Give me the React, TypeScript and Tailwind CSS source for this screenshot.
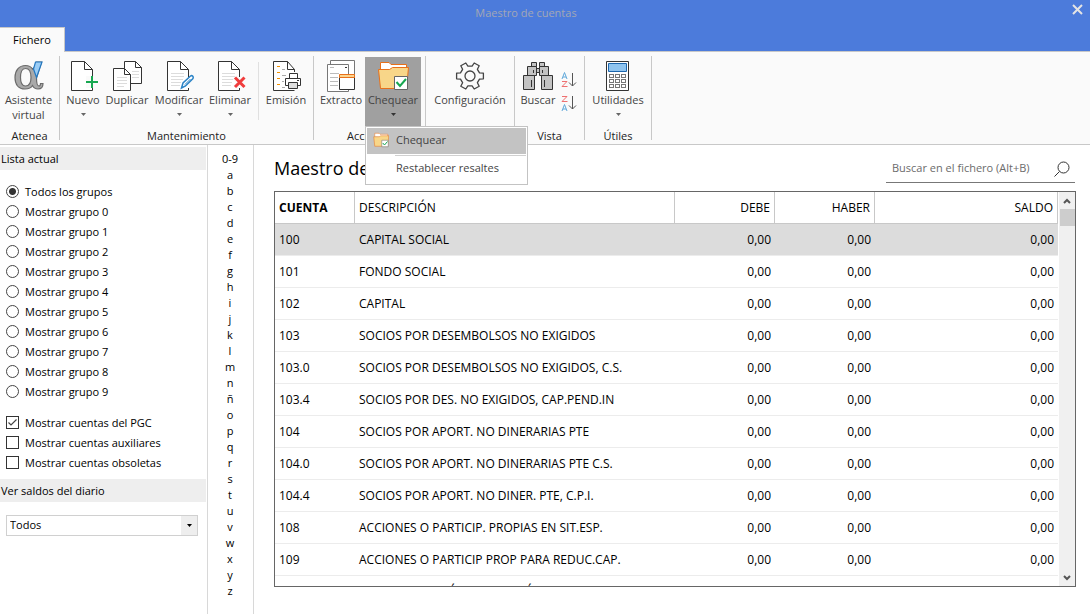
import { ReactNode, useState } from "react";

const groups = ["Todos los grupos", ...Array.from({ length: 10 }, (_, i) => `Mostrar grupo ${i}`)];
const letters = ["0-9", ..."abcdefghijklmnñopqrstuvwxyz".split("")];

const accounts: [string, string][] = [
  ["100", "CAPITAL SOCIAL"],
  ["101", "FONDO SOCIAL"],
  ["102", "CAPITAL"],
  ["103", "SOCIOS POR DESEMBOLSOS NO EXIGIDOS"],
  ["103.0", "SOCIOS POR DESEMBOLSOS NO EXIGIDOS, C.S."],
  ["103.4", "SOCIOS POR DES. NO EXIGIDOS, CAP.PEND.IN"],
  ["104", "SOCIOS POR APORT. NO DINERARIAS PTE"],
  ["104.0", "SOCIOS POR APORT. NO DINERARIAS PTE C.S."],
  ["104.4", "SOCIOS POR APORT. NO DINER. PTE, C.P.I."],
  ["108", "ACCIONES O PARTICIP. PROPIAS EN SIT.ESP."],
  ["109", "ACCIONES O PARTICIP PROP PARA REDUC.CAP."],
  ["110", "PRIMA DE EMISIÓN O ASUNCIÓN"],
];

function Svg({ children, size = 32 }: { children: ReactNode; size?: number }) {
  return (
    <svg width={size} height={size} viewBox="0 0 32 32" fill="none" aria-hidden="true" className="block shrink-0">
      {children}
    </svg>
  );
}

const AlphaIcon = () => (
  <Svg>
    <path
      d="M19.500 9 C18 6.500 15.500 5.500 12.500 5.500 C6 5.500 2 10.500 2 17.500 C2 24.500 5.500 29 12 29 C15.500 29 18 28 19.500 25.500 C20.500 27.500 22 29 25 29 C28.500 29 30 27 30 23.500 L27.500 23.500 C27.500 25 27 26 26 26 C24 26 23.500 23 23.500 18 L28.500 2 H23.500 L22 7 Z M12.500 8.500 C16.500 8.500 18 12 18 17.500 C18 22.500 16.500 26 12.500 26 C9 26 7.500 22.500 7.500 17.500 C7.500 12 9 8.500 12.500 8.500 Z"
      fill="#a9a9a9"
      stroke="#6b6b6b"
      strokeWidth="1.200"
      fillRule="evenodd"
    />
    <path d="M20.500 9 L22.500 2 H29 L23.500 17.500 Z" fill="#9bcdf5" stroke="#2578c0" strokeWidth="1.200" />
  </Svg>
);

const Page = ({ lines = true }: { lines?: boolean }) => (
  <>
    <path d="M4.500 1.500 H17.500 L25.500 9.500 V30.500 H4.500 Z" fill="#fff" />
    <path d="M25.500 17 V9.500 L17.500 1.500 H4.500 V30.500 H25.500 V28" stroke="#333" />
    <path d="M17.500 1.500 V9.500 H25.500" stroke="#333" />
    {lines && <path d="M8 13.500 H21 M8 16.500 H21 M8 19.500 H20 M8 22.500 H18 M8 25.500 H17" stroke="#dcdcdc" />}
  </>
);

const NewIcon = () => (
  <Svg>
    <Page lines={false} />
    <path d="M19 16 H31 V28 H19 Z" fill="#fafafa" />
    <path d="M25 16 V28 M19 22 H31" stroke="#17a750" strokeWidth="2" />
  </Svg>
);

const DuplicateIcon = () => (
  <Svg>
    <path d="M13.500 1.500 H24.500 L30.500 7.500 V23.500 H13.500 Z" fill="#fff" stroke="#333" />
    <path d="M24.500 1.500 V7.500 H30.500" stroke="#333" />
    <path d="M21 11.500 H28 M21 14.500 H28 M21 17.500 H28" stroke="#dcdcdc" />
    <path d="M2.500 8.500 H13.500 L19.500 14.500 V30.500 H2.500 Z" fill="#fff" stroke="#333" />
    <path d="M13.500 8.500 V14.500 H19.500" stroke="#333" />
    <path d="M6 17.500 H16 M6 20.500 H16 M6 23.500 H16 M6 26.500 H13" stroke="#dcdcdc" />
  </Svg>
);

const EditIcon = () => (
  <Svg>
    <Page />
    <path d="M18.500 28 L20 23 L27.500 16 C29 15 31 16.500 30 18.500 L22.500 26 Z" fill="#fff" stroke="#2b83c6" strokeWidth="1.500" />
    <path d="M22 24.500 L27.500 19" stroke="#2b83c6" />
  </Svg>
);

const DeleteIcon = () => (
  <Svg>
    <Page />
    <path d="M21 17 L30.500 27.500 M30.500 17 L21 27.500" stroke="#fafafa" strokeWidth="6" />
    <path d="M21 17.500 L30.500 27 M30.500 17.500 L21 27" stroke="#f03c3c" strokeWidth="3" />
  </Svg>
);

const PrintIcon = () => (
  <Svg>
    <path d="M24.500 12 V9.500 L17.500 1.500 H3.500 V30.500 H24.500" fill="#fff" stroke="#333" />
    <path d="M17.500 1.500 V9.500 H24.500" stroke="#333" />
    <path d="M7 6.500 H10 M7 12.500 H10 M7 18.500 H10 M7 24.500 H10" stroke="#f29100" />
    <path d="M12 9.500 H15 M12 15.500 H16 M12 21.500 H14 M12 27.500 H15" stroke="#aaa" />
    <path d="M19.500 18 V13.500 H27.500 V18" fill="#fff" stroke="#333" />
    <path d="M19 25.500 H15.500 V18.500 H30.500 V25.500 H27" fill="#fff" stroke="#333" />
    <path d="M18.500 22.500 H27.500 V28.500 H18.500 Z" fill="#ddd" stroke="#333" />
    <path d="M27 20.500 H29" stroke="#333" />
  </Svg>
);

const ExtractIcon = () => (
  <Svg>
    <path d="M5.500 0.500 H29.500 V26.500 H5.500 Z" fill="#fff" stroke="#777" />
    <path d="M2.500 4.500 H23.500 V31.500 H2.500 Z" fill="#fff" stroke="#777" />
    <path d="M5 7.500 H9 M5 13.500 H14 M5 17.500 H13 M5 21.500 H13 M5 25.500 H13" stroke="#bbb" />
    <path d="M20 7.500 H22" stroke="#333" />
    <path d="M14.500 17.500 H29.500 V29.500 H14.500 Z" fill="#fff" stroke="#333" />
    <path d="M14.500 14.500 H29.500 V17.500 H14.500 Z" fill="#fbd48f" stroke="#e8701a" />
  </Svg>
);

const FolderCheckIcon = ({ size = 32 }: { size?: number }) => (
  <Svg size={size}>
    <path d="M3.500 9 V2.500 H12 L14 4.500 H29.500 V10" fill="#fff" stroke="#e8701a" />
    <path d="M1.500 9.500 H12.500 L15.500 7.500 H31.500 L29.500 28.500 H3.500 Z" fill="#f8d689" stroke="#e8701a" />
    <path d="M17.500 16.500 H30.500 V29.500 H17.500 Z" fill="#fff" stroke="#666" />
    <path d="M19.500 22 L23 26 L29 19" stroke="#17a750" strokeWidth="2" />
  </Svg>
);

const GearIcon = () => (
  <Svg>
    <path
      d="M25.500 12.900 L29.400 13.200 V18.800 L25.500 19.100 L23.400 22.700 L25.200 26.200 L20.200 29 L18.100 25.800 H13.900 L11.800 29 L6.800 26.200 L8.600 22.700 L6.500 19.100 L2.600 18.800 V13.200 L6.500 12.900 L8.600 9.300 L6.800 5.800 L11.800 3 L13.900 6.200 H18.100 L20.200 3 L25.200 5.800 L23.400 9.300 Z"
      fill="#fafafa"
      stroke="#444"
      strokeWidth="1.300"
      strokeLinejoin="round"
    />
    <circle cx="16" cy="16" r="5" stroke="#444" strokeWidth="1.300" />
  </Svg>
);

const BinocularsIcon = () => (
  <Svg>
    <g fill="#c3c3c3" stroke="#333">
      <path d="M9.500 2.500 H14.500 V6.500 H9.500 Z M17.500 2.500 H22.500 V6.500 H17.500 Z" />
      <path d="M14.500 8.500 H17.500 V12.500 H14.500 Z" />
      <path d="M5.500 6.500 H14.500 V15.500 H5.500 Z M17.500 6.500 H26.500 V15.500 H17.500 Z" />
      <path d="M1.500 15.500 H12.500 V29.500 H1.500 Z M19.500 15.500 H30.500 V29.500 H19.500 Z" />
      <path d="M11.500 10 V13 M20.500 10 V13 M9.500 20 V27 M22.500 20 V27" />
    </g>
  </Svg>
);

const CalculatorIcon = () => (
  <Svg>
    <path d="M4.500 1.500 H26.500 V30.500 H4.500 Z" fill="#fff" stroke="#333" />
    <path d="M6.500 3.500 H24.500 V11.500 H6.500 Z" fill="#8fc4ef" stroke="#1c66ad" />
    <g stroke="#777">
      {[14.5, 19.5, 24.5].map((y) =>
        [7.5, 13.5, 19.5].map((x) => <rect key={`${x}-${y}`} x={x} y={y} width="4" height="3" fill="#fff" />),
      )}
    </g>
  </Svg>
);

const SortIcon = ({ up = false }: { up?: boolean }) => (
  <svg width="16" height="18" viewBox="0 0 16 18" fill="none" aria-hidden="true" className="block">
    <path d={up ? "M1 17 L3.500 10.500 L6 17 M2 15 H5" : "M1 8 L3.500 1.500 L6 8 M2 6 H5"} stroke="#5fa8da" />
    <path d={up ? "M1 2.500 H6 L1 7.500 H6.500" : "M1 10.500 H6 L1 15.500 H6.500"} stroke="#ee7070" />
    <path d="M11.500 2 V15 M8 11.500 L11.500 15 L15 11.500" stroke="#555" />
  </svg>
);

function Caret({ className = "text-[#666]" }: { className?: string }) {
  return (
    <svg width="5" height="3" viewBox="0 0 5 3" aria-hidden="true" className={className}>
      <path d="M0 0 H5 L2.500 3 Z" fill="currentColor" />
    </svg>
  );
}

function RibbonButton({
  icon,
  label,
  className,
  menu = false,
  active = false,
}: {
  icon: ReactNode;
  label: ReactNode;
  className: string;
  menu?: boolean;
  active?: boolean;
}) {
  return (
    <button
      type="button"
      aria-haspopup={menu ? "menu" : undefined}
      aria-expanded={menu ? active : undefined}
      className={`flex h-[70px] shrink-0 flex-col items-center whitespace-nowrap pt-[3px] text-[11px] leading-[15px] text-[#444] ${active ? "bg-[#a0a0a0]" : ""} ${className}`}
    >
      {icon}
      <span>{label}</span>
      {menu && <Caret className={active ? "mt-[6px] text-[#333]" : "mt-[6px] text-[#666]"} />}
    </button>
  );
}

function RibbonGroup({ caption, className, children }: { caption: string; className: string; children: ReactNode }) {
  return (
    <section
      aria-label={caption || "Configuración"}
      className={`flex shrink-0 flex-col border-r border-[#c8c8c8] pt-px ${className}`}
    >
      <div className="flex">{children}</div>
      <div className="h-[14px] text-center text-[11px] leading-[18px] text-[#222]">{caption}</div>
    </section>
  );
}

export default function App() {
  const [group, setGroup] = useState(0);
  const [checks, setChecks] = useState([true, false, false]);

  return (
    <div className="flex h-screen flex-col overflow-hidden bg-white font-['Open_Sans','Noto_Sans',sans-serif] text-[11px] text-black">
      <header className="bg-[#4c7bdb]">
        <div className="flex h-[27px] items-center">
          <h1 className="flex-1 pl-3 pr-6 text-center text-[11px] text-[#a3a7b5]">Maestro de cuentas</h1>
          <button type="button" aria-label="Cerrar" className="flex h-[18px] w-[26px] items-center justify-center self-start">
            <svg width="12" height="12" viewBox="0 0 12 12" aria-hidden="true">
              <path d="M2 2 L11 11 M11 2 L2 11" stroke="#e4e4e4" strokeWidth="2" />
            </svg>
          </button>
        </div>
        <nav className="flex h-[25px]">
          <button type="button" className="w-[65px] border-t border-r border-[#c8c8c8] bg-[#fafafa] text-[11px]">
            Fichero
          </button>
          <div className="flex-1 border-b border-[#c8c8c8]" />
        </nav>
      </header>

      <div className="flex h-[93px] shrink-0 border-b border-[#c8c8c8] bg-[#fafafa] pt-1 pb-1">
        <RibbonGroup caption="Atenea" className="w-[60px]">
          <RibbonButton
            className="w-[57px]"
            icon={<AlphaIcon />}
            label={
              <>
                Asistente
                <br />
                virtual
              </>
            }
          />
        </RibbonGroup>
        <RibbonGroup caption="Mantenimiento" className="w-[254px]">
          <RibbonButton className="ml-[3px] w-10" icon={<NewIcon />} label="Nuevo" menu />
          <RibbonButton className="w-12" icon={<DuplicateIcon />} label="Duplicar" />
          <RibbonButton className="w-14" icon={<EditIcon />} label="Modificar" menu />
          <RibbonButton className="w-[46px]" icon={<DeleteIcon />} label="Eliminar" menu />
          <div className="mt-[5px] ml-[5px] h-[58px] w-px bg-[#e0e0e0]" />
          <RibbonButton className="w-[54px]" icon={<PrintIcon />} label="Emisión" />
        </RibbonGroup>
        <RibbonGroup caption="Acciones" className="w-[112px]">
          <RibbonButton className="ml-[3px] w-12" icon={<ExtractIcon />} label="Extracto" />
          <div className="relative">
            <RibbonButton className="w-14" icon={<FolderCheckIcon />} label="Chequear" menu active />
            <div
              role="menu"
              className="absolute top-[69px] left-0 z-10 w-[163px] border border-[#c3c3c3] bg-white p-px text-[11px] text-[#444]"
            >
              <button role="menuitem" type="button" className="flex h-[26px] w-full items-center bg-[#c3c3c3] pb-[2px] pl-[6px]">
                <FolderCheckIcon size={16} />
                <span className="pl-[7px]">Chequear</span>
              </button>
              <div className="mt-px ml-7 h-px bg-[#d0d0d0]" />
              <button
                role="menuitem"
                type="button"
                className="flex h-[27px] w-full items-center pb-[2px] pl-[29px] whitespace-nowrap"
              >
                Restablecer resaltes
              </button>
            </div>
          </div>
        </RibbonGroup>
        <RibbonGroup caption="" className="w-[89px]">
          <RibbonButton className="w-[88px]" icon={<GearIcon />} label="Configuración" />
        </RibbonGroup>
        <RibbonGroup caption="Vista" className="w-[70px]">
          <RibbonButton className="ml-[3px] w-10" icon={<BinocularsIcon />} label="Buscar" />
          <div className="ml-[3px] flex flex-col gap-[5px] pt-[14px]">
            <button type="button" aria-label="Orden ascendente">
              <SortIcon />
            </button>
            <button type="button" aria-label="Orden descendente">
              <SortIcon up />
            </button>
          </div>
        </RibbonGroup>
        <RibbonGroup caption="Útiles" className="w-[67px]">
          <RibbonButton className="w-[66px]" icon={<CalculatorIcon />} label="Utilidades" menu />
        </RibbonGroup>
      </div>

      <div className="flex min-h-0 flex-1">
        <aside className="w-[208px] shrink-0 border-r border-[#d8d8d8] pt-[2px] pr-px">
          <h2 className="h-[23px] bg-[#eee] pl-px leading-[23px]">Lista actual</h2>
          <fieldset className="mt-3 pl-[6px]">
            {groups.map((g, i) => (
              <label key={g} className="flex h-5 items-center gap-[6px]">
                <input
                  type="radio"
                  name="grupo"
                  checked={group === i}
                  onChange={() => setGroup(i)}
                  className="mb-px size-[13px] appearance-none rounded-full border border-[#444] bg-white checked:bg-[radial-gradient(circle,#333_0_3px,#fff_4px)]"
                />
                {g}
              </label>
            ))}
          </fieldset>
          <fieldset className="mt-[11px] pl-[6px]">
            {["Mostrar cuentas del PGC", "Mostrar cuentas auxiliares", "Mostrar cuentas obsoletas"].map((t, i) => (
              <label key={t} className="flex h-5 items-center gap-[6px]">
                <span className="relative mb-px flex">
                  <input
                    type="checkbox"
                    checked={checks[i]}
                    onChange={() => setChecks(checks.map((c, j) => (j === i ? !c : c)))}
                    className="peer size-[13px] appearance-none border border-[#333] bg-white"
                  />
                  <svg
                    width="13"
                    height="13"
                    viewBox="0 0 13 13"
                    aria-hidden="true"
                    className="pointer-events-none absolute inset-0 hidden peer-checked:block"
                  >
                    <path d="M2.500 6.500 L5 9 L10.500 3.500" fill="none" stroke="#444" strokeWidth="1.200" />
                  </svg>
                </span>
                {t}
              </label>
            ))}
          </fieldset>
          <h2 className="mt-[6px] h-[23px] bg-[#eee] pl-px leading-[23px]">
            <label htmlFor="saldos">Ver saldos del diario</label>
          </h2>
          <div className="relative mt-[13px] mr-2 ml-[6px]">
            <select id="saldos" className="block h-[21px] w-full appearance-none border border-[#d0d0d0] bg-white pl-[3px]">
              <option>Todos</option>
            </select>
            <span className="pointer-events-none absolute inset-y-px right-px flex w-4 items-center justify-center bg-[#eee]">
              <Caret className="text-black" />
            </span>
          </div>
        </aside>

        <nav aria-label="Índice" className="flex w-[46px] shrink-0 flex-col border-r border-[#d8d8d8] pt-[6px]">
          {letters.map((l) => (
            <button key={l} type="button" className="h-4 shrink-0 pr-px leading-4">
              {l}
            </button>
          ))}
        </nav>

        <main className="flex min-w-0 flex-1 flex-col pr-[14px] pb-[27px] pl-5">
          <div className="flex h-[46px] shrink-0 items-start justify-between">
            <h2 className="pt-[11px] text-[18px] leading-[24px]">Maestro de cuentas</h2>
            <div className="mt-[10px] mr-px flex h-7 w-[189px] items-center border-b border-[#777] pr-[5px] pl-[6px]">
              <input
                type="text"
                aria-label="Buscar en el fichero"
                placeholder="Buscar en el fichero (Alt+B)"
                className="min-w-0 flex-1 outline-none placeholder:text-[#6b6b6b]"
              />
              <button type="button" aria-label="Buscar">
                <svg width="16" height="16" viewBox="0 0 16 16" fill="none" aria-hidden="true">
                  <circle cx="9.500" cy="6.500" r="5.500" stroke="#333" />
                  <path d="M5.500 10.500 L0.500 15.500" stroke="#333" />
                </svg>
              </button>
            </div>
          </div>

          <div className="flex min-h-0 flex-1 border border-[#666]">
            <div className="min-w-0 flex-1 overflow-hidden">
              <table className="w-full table-fixed border-separate border-spacing-0 text-[12px]">
                <colgroup>
                  <col className="w-20" />
                  <col className="w-80" />
                  <col className="w-[100px]" />
                  <col className="w-[100px]" />
                  <col />
                </colgroup>
                <thead>
                  <tr className="h-8 *:border-r *:border-b *:border-[#c8c8c8] *:p-0 *:px-1 *:font-normal">
                    <th className="text-left font-bold!">CUENTA</th>
                    <th className="text-left">DESCRIPCIÓN</th>
                    <th className="text-right">DEBE</th>
                    <th className="text-right">HABER</th>
                    <th className="text-right">SALDO</th>
                  </tr>
                </thead>
                <tbody>
                  {accounts.map(([code, name], i) => (
                    <tr
                      key={code}
                      className={`h-8 *:border-b *:border-[#ececec] *:p-0 *:px-1 *:whitespace-nowrap ${i === 0 ? "bg-[#dcdcdc]" : ""}`}
                    >
                      <td>{code}</td>
                      <td>{name}</td>
                      <td className="text-right">0,00</td>
                      <td className="text-right">0,00</td>
                      <td className="text-right">0,00</td>
                    </tr>
                  ))}
                </tbody>
              </table>
            </div>
            <div className="ml-px flex w-4 shrink-0 flex-col items-center justify-between bg-[#f0f0f0]">
              <div className="flex w-full flex-col items-center">
                <button type="button" aria-label="Subir" className="flex h-[17px] w-full items-center justify-center">
                  <svg width="8" height="6" viewBox="0 0 8 6" aria-hidden="true">
                    <path d="M1 5 L4 2 L7 5" fill="none" stroke="#555" strokeWidth="2" />
                  </svg>
                </button>
                <div className="h-[17px] w-[15px] bg-[#cdcdcd]" />
              </div>
              <button type="button" aria-label="Bajar" className="flex h-[17px] w-full items-center justify-center">
                <svg width="8" height="6" viewBox="0 0 8 6" aria-hidden="true">
                  <path d="M1 1 L4 4 L7 1" fill="none" stroke="#555" strokeWidth="2" />
                </svg>
              </button>
            </div>
          </div>
        </main>
      </div>
    </div>
  );
}
